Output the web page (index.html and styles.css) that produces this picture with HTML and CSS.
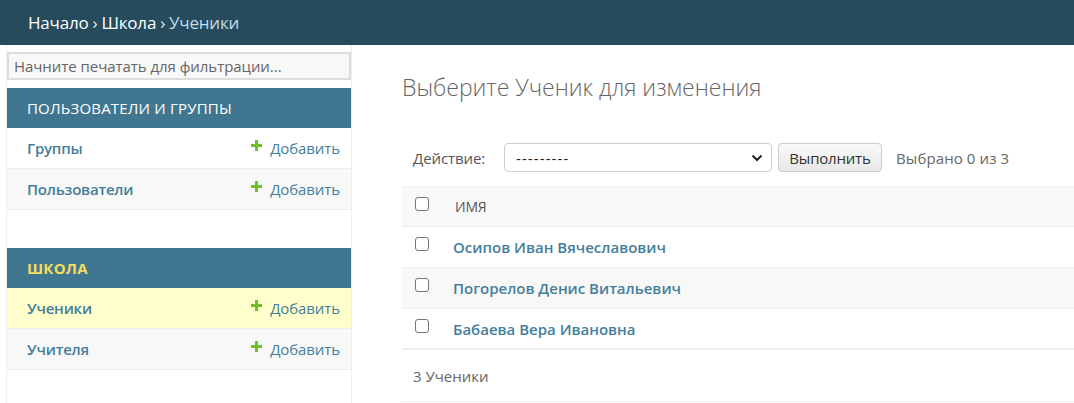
FILE: index.html
```html
<!DOCTYPE html>
<html lang="ru">
<head>
<meta charset="utf-8">
<title>Выберите Ученик для изменения</title>
<link rel="stylesheet" href="styles.css">
</head>
<body>
<div class="breadcrumbs">
  <a href="#">Начало</a> › <a href="#">Школа</a> › <span class="current">Ученики</span>
</div>
<div class="layout">
  <nav class="sidebar">
    <input class="nav-filter" type="search" placeholder="Начните печатать для фильтрации...">
    <div class="module">
      <div class="caption">Пользователи и группы</div>
      <div class="row"><a class="model" href="#">Группы</a><a class="add" href="#"><span class="plus"></span>Добавить</a></div>
      <div class="row alt"><a class="model" href="#">Пользователи</a><a class="add" href="#"><span class="plus"></span>Добавить</a></div>
    </div>
    <div class="module">
      <div class="caption current-app">Школа</div>
      <div class="row selected"><a class="model" href="#">Ученики</a><a class="add" href="#"><span class="plus"></span>Добавить</a></div>
      <div class="row alt"><a class="model" href="#">Учителя</a><a class="add" href="#"><span class="plus"></span>Добавить</a></div>
    </div>
  </nav>
  <main class="content">
    <h1>Выберите Ученик для изменения</h1>
    <div class="actions">
      <label class="action-label">Действие:</label>
      <div class="select">
        <span class="dashes">---------</span>
        <svg width="12" height="8" viewBox="0 0 12 8"><path d="M1.5 1.5 L6 6 L10.5 1.5" fill="none" stroke="#222" stroke-width="2"/></svg>
      </div>
      <button class="go" type="button">Выполнить</button>
      <span class="counter">Выбрано 0 из 3</span>
    </div>
    <div class="results">
      <div class="tr head"><span class="cb"></span><span class="th">Имя</span></div>
      <div class="tr"><span class="cb"></span><a href="#" class="name">Осипов Иван Вячеславович</a></div>
      <div class="tr alt"><span class="cb"></span><a href="#" class="name">Погорелов Денис Витальевич</a></div>
      <div class="tr last"><span class="cb"></span><a href="#" class="name">Бабаева Вера Ивановна</a></div>
    </div>
    <p class="paginator">3 Ученики</p>
  </main>
</div>
</body>
</html>
```

FILE: styles.css
```css
* { box-sizing: border-box; }
body {
  margin: 0;
  font-family: "Open Sans", "Noto Sans", sans-serif;
  color: #333;
  background: #fff;
  overflow: hidden;
}
a { text-decoration: none; }

.breadcrumbs {
  height: 45px;
  background: #264b5d;
  color: #e8f0f4;
  font-size: 17px;
  padding: 0 28px;
  display: flex;
  align-items: center;
  gap: 4px;
  letter-spacing: -0.2px;
}
.breadcrumbs a { color: #fff; }
.breadcrumbs .current { color: #c4dce8; }

.layout {
  display: flex;
  align-items: stretch;
  min-height: 358px;
}
.sidebar {
  margin-left: 6px;
  width: 346px;
  flex: none;
  border-left: 1px solid #eee;
  border-right: 1px solid #eee;
  padding-top: 7px;
}
.nav-filter {
  display: block;
  width: 100%;
  height: 28px;
  margin: 0 0 8px;
  border: 2px solid #ddd;
  background: #f8f8f8;
  padding: 0 5px;
  font-family: inherit;
  font-size: 15px;
  letter-spacing: -0.05px;
}
.nav-filter::placeholder { color: #666; }
.module { margin-bottom: 38px; }
.caption {
  height: 40px;
  background: #417690;
  color: #fff;
  font-size: 15px;
  text-transform: uppercase;
  padding: 0 20px;
  display: flex;
  align-items: center;
  letter-spacing: 0.2px;
}
.caption.current-app { color: #f5dd5d; font-weight: 700; }
.row {
  height: 41px;
  border-bottom: 1px solid #eee;
  display: flex;
  align-items: center;
  justify-content: space-between;
  padding: 0 11px 0 20px;
  font-size: 15px;
  letter-spacing: -0.2px;
}
.row.alt { background: #f8f8f8; }
.row.selected { background: #ffc; }
.model { color: #447e9b; font-weight: 600; }
.add { color: #447e9b; font-size: 15px; display: flex; align-items: center; letter-spacing: -0.1px; }
.plus {
  width: 11px; height: 11px;
  margin-right: 8px;
  margin-top: -6px;
  background:
    linear-gradient(#70bf2b, #70bf2b) center / 11px 3px no-repeat,
    linear-gradient(#70bf2b, #70bf2b) center / 3px 11px no-repeat;
}

.content {
  flex: 1;
  padding: 0 0 0 50px;
  min-width: 0;
}
h1 {
  margin: 27px 0 0;
  height: 30px;
  font-size: 23px;
  font-weight: 300;
  color: #666;
  letter-spacing: 0;
  line-height: 30px;
}
.actions {
  margin-top: 34px;
  height: 43px;
  display: flex;
  align-items: center;
  padding-left: 11px;
  font-size: 15px;
  color: #333;
}
.action-label { color: #555; width: 91px; letter-spacing: -0.1px; }
.select {
  width: 268px;
  height: 29px;
  border: 1px solid #ccc;
  border-radius: 4px;
  display: flex;
  align-items: center;
  justify-content: space-between;
  padding: 0 8px 0 11px;
  color: #222;
}
.dashes { letter-spacing: 1.1px; }
.go {
  margin-left: 6px;
  height: 29px;
  width: 104px;
  border: 1px solid #ccc;
  border-radius: 4px;
  background: linear-gradient(#fafafa, #e8e8e8);
  font-family: inherit;
  font-size: 15px;
  color: #333;
  padding: 0;
  letter-spacing: -0.2px;
}
.counter { margin-left: 14px; color: #666; letter-spacing: 0.1px; }

.results { margin-top: 7px; }
.tr {
  height: 41px;
  border-bottom: 1px solid #eee;
  display: flex;
  align-items: center;
  padding-left: 13px;
}
.tr.head { background: #f8f8f8; border-top: 1px solid #eee; height: 41px; }
.tr.alt { background: #f8f8f8; }
.tr.last { border-bottom: 2px solid #eee; }
.cb {
  width: 14px; height: 14px;
  border: 1px solid #767676;
  border-radius: 3px;
  background: #fff;
  margin-top: -6px;
  margin-right: 26px;
}
.th { font-size: 14px; color: #555; text-transform: uppercase; letter-spacing: -0.2px; }
.name { color: #447e9b; font-weight: 600; font-size: 15px; letter-spacing: 0; margin-left: -2px; }
.paginator {
  margin: 0;
  height: 52px;
  border-bottom: 1px solid #eee;
  display: flex;
  align-items: center;
  padding-left: 11px;
  font-size: 15px;
  color: #666;
}
```
